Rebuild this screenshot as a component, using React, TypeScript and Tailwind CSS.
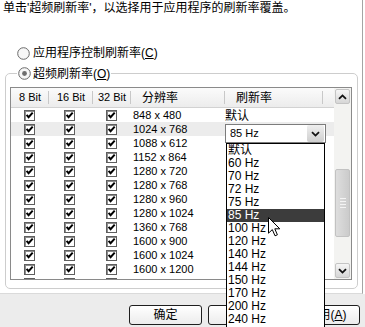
import React from "react";

const resolutions = [
  "848 x 480",
  "1024 x 768",
  "1088 x 612",
  "1152 x 864",
  "1280 x 720",
  "1280 x 768",
  "1280 x 960",
  "1280 x 1024",
  "1360 x 768",
  "1600 x 900",
  "1600 x 1024",
  "1600 x 1200",
  "",
];

const rates = [
  "默认",
  "60 Hz",
  "70 Hz",
  "72 Hz",
  "75 Hz",
  "85 Hz",
  "100 Hz",
  "120 Hz",
  "140 Hz",
  "144 Hz",
  "150 Hz",
  "170 Hz",
  "200 Hz",
  "240 Hz",
];

function Radio({ on }: { on?: boolean }) {
  return (
    <svg width="13" height="13" viewBox="0 0 13 13" className="block shrink-0">
      <circle cx="6.5" cy="6.5" r="5.8" fill="#f7f7f7" stroke="#6a6a6a" />
      {on && <circle cx="6.5" cy="6.5" r="2.4" fill="#6e6e6e" />}
    </svg>
  );
}

function Check() {
  return (
    <svg width="11" height="11" viewBox="0 0 11 11" className="block">
      <rect x="0.5" y="0.5" width="10" height="10" fill="#fff" stroke="#5e5e5e" />
      <path d="M1 1.5 H10 M1.5 1 V10" stroke="#8c8c8c" />
      <path d="M2.6 4.8 L4.6 7.2 L8.7 2.6" fill="none" stroke="#000" strokeWidth="2" />
    </svg>
  );
}

function Chevron({ down }: { down?: boolean }) {
  return (
    <svg width="9" height="6" viewBox="0 0 9 6" className="block">
      <path
        d={down ? "M1 1.2 L4.5 4.6 L8 1.2" : "M1 4.8 L4.5 1.4 L8 4.8"}
        fill="none"
        stroke="#111"
        strokeWidth="1.8"
      />
    </svg>
  );
}

function ScrollButton({ down }: { down?: boolean }) {
  return (
    <div className="mx-auto flex h-[15px] w-[15px] items-center justify-center rounded-[2px] border border-[#c4c4c4] bg-linear-to-b from-[#f6f6f6] to-[#d6d6d6]">
      <Chevron down={down} />
    </div>
  );
}

function Header({ label, w, left }: { label: string; w: string; left?: boolean }) {
  return (
    <div className={`relative flex h-full items-center ${w} ${left ? "pl-[11px]" : "justify-center"}`}>
      <span className={left ? "text-[12px]" : ""}>{label}</span>
      <span className="absolute right-0 top-[3px] h-[13px] w-px bg-[#c8c8c8]" />
    </div>
  );
}

export default function App() {
  return (
    <div className="relative h-[327px] w-[365px] overflow-hidden bg-white font-['Liberation_Sans','Noto_Sans_CJK_SC',sans-serif] text-[11px] text-black">
      <div className="h-[294px] w-[363px] border-r border-b border-r-[#a4a4a4] border-b-[#dadada]">
        <div className="pl-[3px] pt-[1px] text-[12px] leading-[14px]">
          单击'超频刷新率'，以选择用于应用程序的刷新率覆盖。
        </div>
        <div className="ml-[17px] mt-[31px] flex h-[14px] items-center gap-[3px] text-[12px]">
          <Radio />
          <span>
            应用程序控制刷新率(<u>C</u>)
          </span>
        </div>
        <fieldset className="ml-[5px] mt-[6px] w-[353px] rounded-[5px] border border-[#cdcdcd] pb-[8px] pl-[4px] pr-[5px]">
          <legend className="ml-[7px] flex h-[15px] items-center gap-[2px] px-[1px] text-[12px]">
            <Radio on />
            <span>
              超频刷新率(<u>O</u>)
            </span>
          </legend>
          <div className="mt-[6px] flex h-[193px] w-[342px] border border-[#8a8a8a]">
            <div className="flex w-[323px] flex-col overflow-hidden">
              <div className="flex h-[20px] shrink-0 border-b border-[#d2d2d2] bg-linear-to-b from-[#fbfbfb] to-[#ececec]">
                <Header label="8 Bit" w="w-[38px]" />
                <Header label="16 Bit" w="w-[44px]" />
                <Header label="32 Bit" w="w-[38px]" />
                <Header label="分辨率" w="w-[94px]" left />
                <Header label="刷新率" w="w-[98px]" left />
              </div>
              {resolutions.map((r, i) => (
                <div
                  key={i}
                  className={`flex h-[14px] shrink-0 items-center ${i === 1 ? "bg-[#ececec]" : ""}`}
                >
                  <div className="w-[38px] pl-[13px]">
                    <Check />
                  </div>
                  <div className="w-[44px] pl-[15px]">
                    <Check />
                  </div>
                  <div className="w-[38px] pl-[13px]">
                    <Check />
                  </div>
                  <div className="w-[94px] pl-[2px]">{r}</div>
                  <div className="relative h-full w-[98px]">
                    {i === 0 && <span className="text-[12px] leading-[14px]">默认</span>}
                    {i === 1 && (
                      <div className="absolute left-0 top-[2px] flex h-[19px] w-[101px] items-center border border-[#7c7c7c] bg-white pl-[4px] pr-px">
                        <span className="flex-1">85 Hz</span>
                        <div className="flex h-[17px] w-[17px] items-center justify-center rounded-[2px] bg-linear-to-b from-[#efefef] to-[#cfcfcf]">
                          <Chevron down />
                        </div>
                      </div>
                    )}
                  </div>
                </div>
              ))}
            </div>
            <div className="flex w-[17px] flex-col bg-[#f3f3f1] py-px">
              <ScrollButton />
              <div className="mx-auto mt-[65px] flex h-[68px] w-[15px] flex-col items-center justify-center gap-[2px] rounded-[2px] border border-[#c2c2c2] bg-linear-to-r from-[#dedede] to-[#cbcbcb]">
                <span className="h-px w-[6px] bg-[#f4f4f4]" />
                <span className="h-px w-[6px] bg-[#f4f4f4]" />
                <span className="h-px w-[6px] bg-[#f4f4f4]" />
                <span className="h-px w-[6px] bg-[#f4f4f4]" />
              </div>
              <div className="flex-1" />
              <ScrollButton down />
            </div>
          </div>
        </fieldset>
      </div>

      <div className="flex h-[33px] justify-end gap-[6px] bg-[#ececec] pr-[5px] pt-[11px] text-[12px]">
        <div className="flex h-[20px] w-[73px] items-center justify-center rounded-[3px] border border-[#1e1e1e] bg-linear-to-b from-white to-[#ececec]">
          确定
        </div>
        <div className="h-[20px] w-[73px] rounded-[3px] border border-[#1e1e1e] bg-linear-to-b from-white to-[#ececec]" />
        <div className="flex h-[20px] w-[73px] items-center justify-center rounded-[3px] border border-[#1e1e1e] bg-linear-to-b from-white to-[#ececec] pl-[6px]">
          应用(<u>A</u>)
        </div>
      </div>

      <div className="absolute left-[226px] top-[143px] h-[190px] w-[99px] border border-black bg-white">
        {rates.map((r) => (
          <div
            key={r}
            className={`h-[13px] overflow-hidden pl-[1px] text-[12px] leading-[13px] ${r === "85 Hz" ? "bg-[#3c3c3c] text-white" : ""}`}
          >
            {r}
          </div>
        ))}
      </div>

      <svg
        className="absolute left-[268px] top-[217px]"
        width="13"
        height="20"
        viewBox="0 0 13 20"
      >
        <path
          d="M0.5 0.5 L0.5 16.2 L4.3 12.6 L7 18.8 L9.4 17.8 L6.8 11.8 L11.8 11.8 Z"
          fill="#fff"
          stroke="#000"
          strokeWidth="1"
        />
      </svg>
    </div>
  );
}
